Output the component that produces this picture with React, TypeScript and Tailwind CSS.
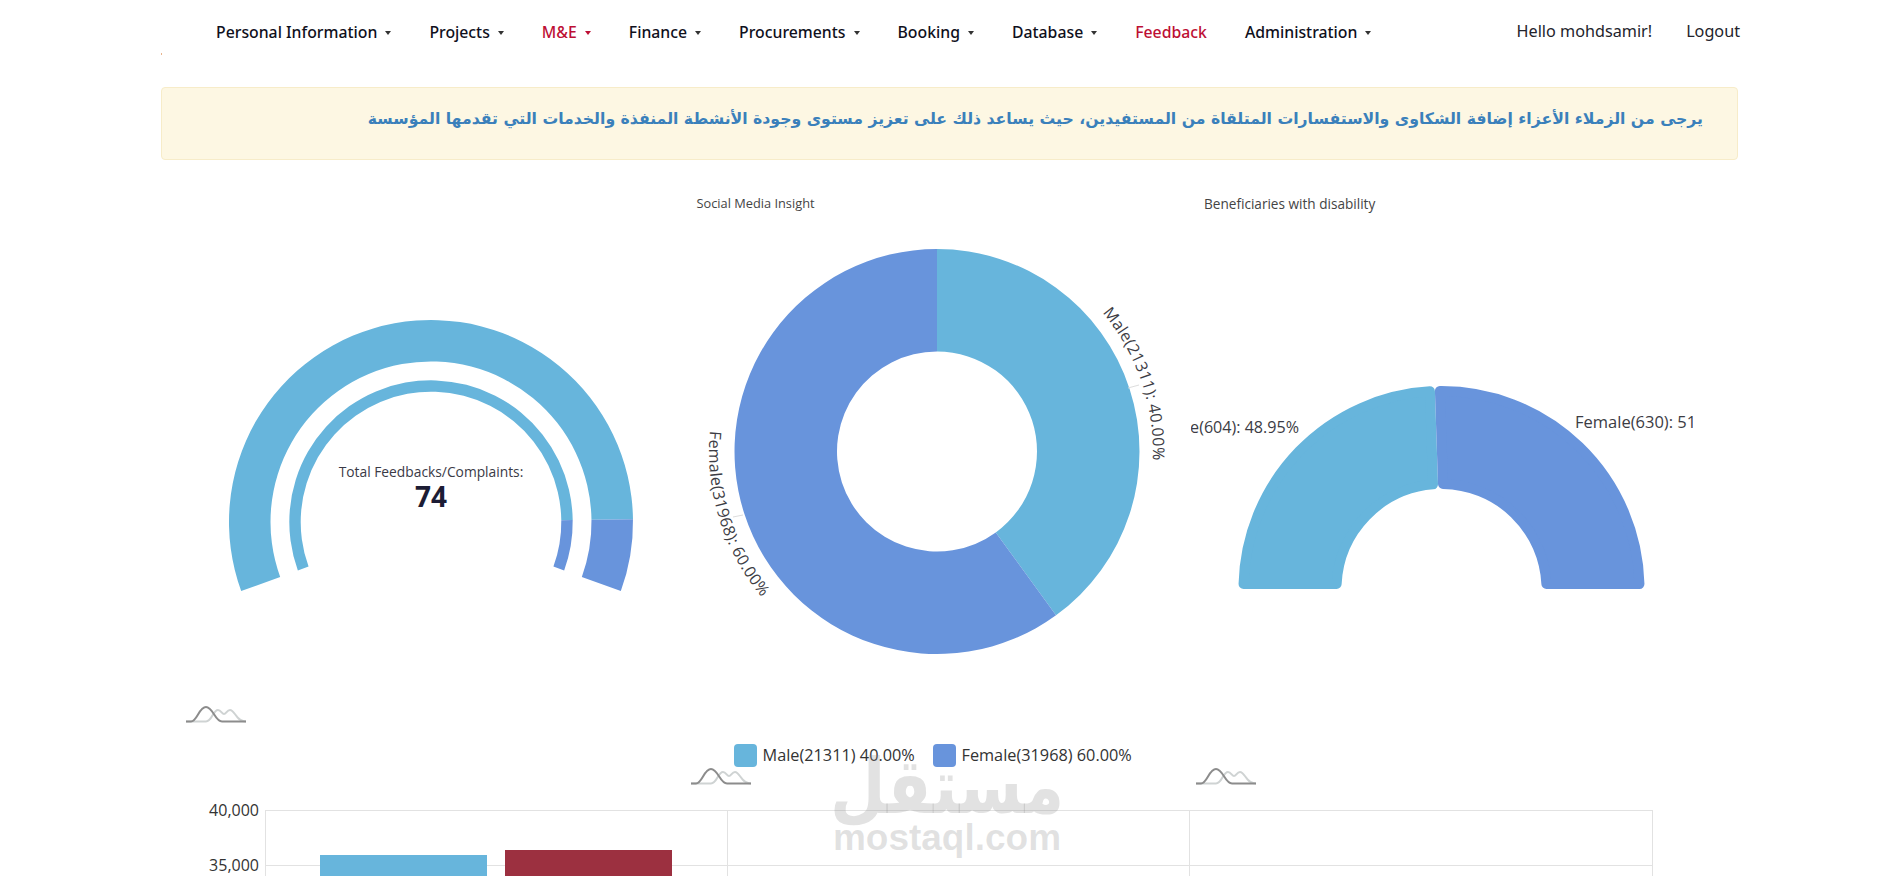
const CYAN = '#67b5dc';
const BLUE = '#6894dc';

const polar = (cx: number, cy: number, r: number, deg: number) => {
  const a = (deg * Math.PI) / 180;
  return `${(cx + r * Math.cos(a)).toFixed(2)} ${(cy + r * Math.sin(a)).toFixed(2)}`;
};

// ring segment, angles run clockwise on screen from +x
const ring = (cx: number, cy: number, r0: number, r1: number, a0: number, a1: number) => {
  const big = a1 - a0 > 180 ? 1 : 0;
  return `M${polar(cx, cy, r1, a0)} A${r1} ${r1} 0 ${big} 1 ${polar(cx, cy, r1, a1)} L${polar(cx, cy, r0, a1)} A${r0} ${r0} 0 ${big} 0 ${polar(cx, cy, r0, a0)} Z`;
};

// same, pulled in by c so that a stroke of 2c gives round corners
const softRing = (cx: number, cy: number, r0: number, r1: number, a0: number, a1: number, c: number) => {
  const ri = r0 + c;
  const ro = r1 - c;
  const di = ((c / ri) * 180) / Math.PI;
  const dOut = ((c / ro) * 180) / Math.PI;
  return `M${polar(cx, cy, ro, a0 + dOut)} A${ro} ${ro} 0 0 1 ${polar(cx, cy, ro, a1 - dOut)} L${polar(cx, cy, ri, a1 - di)} A${ri} ${ri} 0 0 0 ${polar(cx, cy, ri, a0 + di)} Z`;
};

const arcPath = (cx: number, cy: number, r: number, a0: number, a1: number) => {
  const sweep = a1 > a0 ? 1 : 0;
  return `M${polar(cx, cy, r, a0)} A${r} ${r} 0 0 ${sweep} ${polar(cx, cy, r, a1)}`;
};

const Spark = () => (
  <svg viewBox="0 0 60 17" className="block h-[17px] w-[60px]" fill="none" strokeWidth="2">
    <path d="M0 15.5 H20 C26 15.5 27 4 32 4 C35 4 36 8 38 8 C40 8 41 4 44 4 C49 4 50 15.5 60 15.5" stroke="#cfd3d3" />
    <path d="M0 15.5 H5 C11 15.5 13 1 20 1 C27 1 29 15.5 36 15.5 H60" stroke="#8c8c8c" />
  </svg>
);

const NavItem = ({ label, red, caret = true }: { label: string; red?: boolean; caret?: boolean }) => (
  <a className={`flex items-center text-[15.8px] font-medium whitespace-nowrap ${red ? 'text-[#bd0f34]' : 'text-[#10101c]'}`}>
    {label}
    {caret && (
      <span className={`ml-2 h-0 w-0 border-x-[3.5px] border-t-[4px] border-x-transparent ${red ? 'border-t-[#bd0f34]' : 'border-t-[#333]'}`} />
    )}
  </a>
);

const Gauge = () => (
  <svg viewBox="0 0 502 480" className="block h-[480px] w-[502px] overflow-hidden">
    <path d={ring(251, 306, 160.5, 202, 160, 359.2)} fill={CYAN} />
    <path d={ring(251, 306, 160.5, 202, 359.2, 380)} fill={BLUE} />
    <path d={ring(251, 306, 130.3, 141.7, 160, 359.2)} fill={CYAN} />
    <path d={ring(251, 306, 130.3, 141.7, 359.2, 380)} fill={BLUE} />
    <text x="251" y="261" textAnchor="middle" fontSize="13.8" fill="#3a3a46" fontFamily="Open Sans, sans-serif">
      Total Feedbacks/Complaints:
    </text>
    <text x="251" y="291" textAnchor="middle" fontSize="28" fontWeight="700" fill="#1c1c34" fontFamily="Open Sans, sans-serif">
      74
    </text>
  </svg>
);

const Donut = () => (
  <svg viewBox="0 0 502 480" className="block h-[480px] w-[502px] overflow-hidden">
    <defs>
      <path id="male-arc" d={arcPath(251, 235.5, 216, -40, 15)} />
      <path id="female-arc" d={arcPath(251, 235.5, 228, 185.2, 120)} />
    </defs>
    <path d={ring(251, 235.5, 100, 202.5, 270, 414)} fill={CYAN} />
    <path d={ring(251, 235.5, 100, 202.5, 54, 270)} fill={BLUE} />
    <path d="M442 172 L453 169" stroke="#ddd" />
    <path d="M47 301 L57 299" stroke="#ddd" />
    <text fontSize="16" letterSpacing="0.3" fill="#3c3c44" fontFamily="Open Sans, sans-serif">
      <textPath href="#male-arc">Male(21311): 40.00%</textPath>
    </text>
    <text fontSize="16" letterSpacing="0.35" fill="#3c3c44" fontFamily="Open Sans, sans-serif">
      <textPath href="#female-arc">Female(31968): 60.00%</textPath>
    </text>
  </svg>
);

const HalfDonut = () => (
  <svg viewBox="0 0 502 480" className="block h-[480px] w-[502px] overflow-hidden">
    <path d={softRing(250.5, 373, 100, 203, 180, 268.1, 5)} fill={CYAN} stroke={CYAN} strokeWidth="10" strokeLinejoin="round" />
    <path d={softRing(250.5, 373, 100, 203, 268.1, 360, 5)} fill={BLUE} stroke={BLUE} strokeWidth="10" strokeLinejoin="round" />
    <text x="108" y="217" textAnchor="end" fontSize="16.1" fill="#3c3c44" fontFamily="Open Sans, sans-serif">
      Male(604): 48.95%
    </text>
    <text x="384" y="212" fontSize="16.5" fill="#3c3c44" fontFamily="Open Sans, sans-serif">
      Female(630): 51.05%
    </text>
  </svg>
);

const Legend = () => (
  <div className="mt-[47px] flex h-6 items-center pl-[48px] text-[16.3px] text-[#333] font-['Open_Sans',sans-serif]">
    <span className="h-[23px] w-[23px] rounded-[4px] bg-[#67b5dc]" />
    <span className="ml-[6px] w-[170px] whitespace-nowrap">Male(21311) 40.00%</span>
    <span className="h-[23px] w-[23px] rounded-[4px] bg-[#6894dc]" />
    <span className="ml-[6px] whitespace-nowrap">Female(31968) 60.00%</span>
  </div>
);

const BarChart = () => (
  <svg viewBox="0 0 1500 90" className="block h-[90px] w-[1500px]">
    <g stroke="#e2e2e2">
      <path d="M65 9.5 H1453 M65 64.5 H1453" />
      <path d="M65.5 9 V90 M527.5 9 V90 M989.5 9 V90 M1452.5 9 V90" />
    </g>
    <rect x="120" y="54" width="167" height="36" fill="#67b5dc" />
    <rect x="305" y="49" width="167" height="41" fill="#9c3040" />
    <g fontSize="16" fill="#333" textAnchor="end" fontFamily="Open Sans, sans-serif">
      <text x="59" y="15">40,000</text>
      <text x="59" y="70">35,000</text>
    </g>
  </svg>
);

export default function App() {
  return (
    <div className="relative h-[876px] overflow-hidden bg-white font-['Open_Sans',sans-serif]">
      {/* Top nav */}
      <nav className="relative flex h-[65px] items-center pl-[216px] pr-[154px] font-['Noto_Sans',sans-serif]">
        <span className="absolute left-[161px] top-[53px] h-[2px] w-px bg-[#e9b48c]" />
        <div className="flex gap-[38px]">
          <NavItem label="Personal Information" />
          <NavItem label="Projects" />
          <NavItem label="M&E" red />
          <NavItem label="Finance" />
          <NavItem label="Procurements" />
          <NavItem label="Booking" />
          <NavItem label="Database" />
          <NavItem label="Feedback" red caret={false} />
          <NavItem label="Administration" />
        </div>
        <div className="ml-auto flex gap-[34px] pb-[3px] text-[16.2px] text-[#23232b]">
          <span>Hello mohdsamir!</span>
          <span>Logout</span>
        </div>
      </nav>

      {/* Notice */}
      <div className="ml-[161px] mt-[22px] h-[73px] w-[1577px] rounded-[4px] border border-[#f7ecc9] bg-[#fdf7e3] pr-[34px] pt-[19px] font-['DejaVu_Sans',sans-serif] text-[15.7px] font-bold text-[#3a80bb]" dir="rtl">
        يرجى من الزملاء الأعزاء إضافة الشكاوى والاستفسارات المتلقاة من المستفيدين، حيث يساعد ذلك على تعزيز مستوى وجودة الأنشطة المنفذة والخدمات التي تقدمها المؤسسة
      </div>

      {/* Charts */}
      <div className="mt-[34px] flex gap-[3.5px] pl-[180px]">
        <div className="w-[502px]">
          <div className="h-[22px]" />
          <Gauge />
          <div className="ml-[6px] mt-[10px]">
            <Spark />
          </div>
        </div>
        <div className="w-[502px]">
          <div className="h-[22px] pl-[11px] text-[12.8px] leading-[18px] text-[#444]">Social Media Insight</div>
          <Donut />
          <Legend />
          <div className="ml-[5px] mt-[1px]">
            <Spark />
          </div>
        </div>
        <div className="w-[502px]">
          <div className="h-[22px] pl-[13px] pt-px text-[13.6px] leading-[18px] text-[#444]">Beneficiaries with disability</div>
          <HalfDonut />
          <div className="h-6 mt-[47px]" />
          <div className="ml-[5px] mt-[1px]">
            <Spark />
          </div>
        </div>
      </div>

      <div className="pl-[200px] pt-[16px]">
        <BarChart />
      </div>

      {/* Site watermark */}
      <div className="pointer-events-none absolute left-[833px] top-[745px] flex w-[228px] flex-col items-center text-[#8a8a8a]/25">
        <span className="origin-bottom translate-y-[10px] scale-y-[1.2] font-['DejaVu_Sans',sans-serif] text-[64px] font-bold leading-[78px]">مستقل</span>
        <span className="-mt-[3px] font-['Liberation_Sans',sans-serif] text-[37px] font-bold leading-[36px]">mostaql.com</span>
      </div>
    </div>
  );
}
